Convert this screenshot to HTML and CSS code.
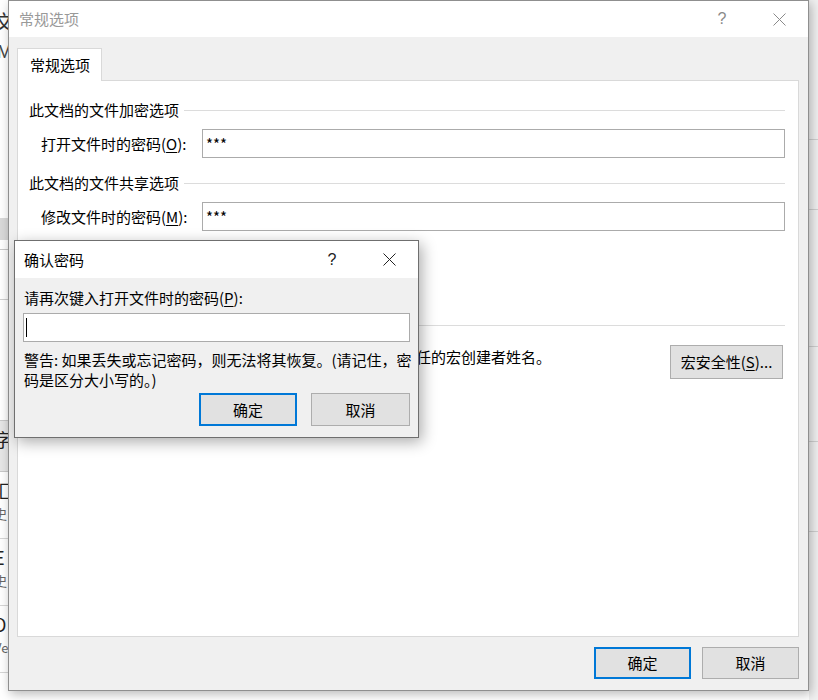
FILE: index.html
```html
<!DOCTYPE html>
<html lang="zh-CN">
<head>
<meta charset="utf-8">
<title>常规选项</title>
<link rel="stylesheet" href="styles.css">
</head>
<body>
<div class="bg-left">
  <div class="bl-top"><span class="bl-wen">文</span><span class="bl-m">M</span></div>
  <div class="bl-band"></div>
  <div class="bl-gap1"></div>
  <div class="bl-band2"></div>
  <div class="bl-gap2"></div>
  <div class="bl-row"><span class="bl-big">字</span></div>
  <div class="bl-row2"><span class="bl-big">汇</span><span class="bl-small">史</span></div>
  <div class="bl-row2"><span class="bl-big">E</span><span class="bl-small">史</span></div>
  <div class="bl-row2"><span class="bl-big">D</span><span class="bl-small">Ve</span></div>
</div>
<div class="bg-right">
  <div class="br-cell br-h1"></div>
  <div class="br-cell br-h2"></div>
  <div class="br-cell br-h3"></div>
  <div class="br-cell br-h4"></div>
  <div class="br-cell br-h5"></div>
</div>

<div class="win main-win">
  <div class="titlebar">
    <span class="title inactive">常规选项</span>
    <span class="tb-help inactive">?</span>
    <span class="tb-close inactive">
      <svg width="13" height="13" viewBox="0 0 13 13"><path d="M0.5 0.5 L12.5 12.5 M12.5 0.5 L0.5 12.5" stroke="currentColor" stroke-width="1" fill="none"/></svg>
    </span>
  </div>
  <div class="main-body">
    <div class="tabs"><div class="tab">常规选项</div></div>
    <div class="panel">
      <div class="group-head"><span>此文档的文件加密选项</span><i class="rule"></i></div>
      <div class="field"><span class="field-label">打开文件时的密码(<u>O</u>):</span><div class="textbox">***</div></div>
      <div class="group-head group-gap"><span>此文档的文件共享选项</span><i class="rule"></i></div>
      <div class="field"><span class="field-label">修改文件时的密码(<u>M</u>):</span><div class="textbox">***</div></div>
      <div class="hidden-rows"></div>
      <div class="group-head macro-head"><i class="rule"></i></div>
      <div class="macro-row">
        <span class="macro-text">调整安全级别以打开可能包含宏病毒的文件，并指定可信任的宏创建者姓名。</span>
        <span class="btn macro-btn">宏安全性(<u>S</u>)...</span>
      </div>
    </div>
    <div class="footer">
      <span class="btn primary footer-btn">确定</span>
      <span class="btn footer-btn">取消</span>
    </div>
  </div>
</div>

<div class="win confirm-win">
  <div class="titlebar confirm-title">
    <span class="title">确认密码</span>
    <span class="tb-help">?</span>
    <span class="tb-close">
      <svg width="13" height="13" viewBox="0 0 13 13"><path d="M0.5 0.5 L12.5 12.5 M12.5 0.5 L0.5 12.5" stroke="currentColor" stroke-width="1" fill="none"/></svg>
    </span>
  </div>
  <div class="confirm-body">
    <div class="confirm-label">请再次键入打开文件时的密码(<u>P</u>):</div>
    <div class="textbox confirm-input"><span class="caret"></span></div>
    <div class="warning"><span class="nowrap">警告: 如果丢失或忘记密码，则无法将其恢复。(请记住，密</span><br><span class="nowrap">码是区分大小写的。)</span></div>
    <div class="confirm-buttons">
      <span class="btn primary ok-btn">确定</span>
      <span class="btn cancel-btn">取消</span>
    </div>
  </div>
</div>
</body>
</html>
```

FILE: styles.css
```css
* { box-sizing: border-box; }
html, body { margin: 0; padding: 0; }
body {
  width: 818px;
  height: 700px;
  overflow: hidden;
  position: relative;
  background: #ffffff;
  font-family: "Noto Sans CJK SC", "Microsoft YaHei", sans-serif;
  font-size: 15px;
  line-height: 20px;
  color: #000;
}
u { text-decoration: underline; text-underline-offset: 2px; }

/* background window fragments */
.bg-left {
  position: absolute;
  left: 0; top: 0;
  width: 9px; height: 700px;
  overflow: hidden;
  background: #fff;
  display: flex;
  flex-direction: column;
}
.bl-top { height: 218px; position: relative; font-size: 20px; color: #333; }
.bl-wen { position: absolute; left: -6px; top: 12px; }
.bl-m { position: absolute; left: -3px; top: 42px; font-family: "Liberation Sans", sans-serif; font-size: 18px; color: #444; }
.bl-band { height: 22px; background: #d9d9d9; }
.bl-gap1 { height: 10px; background: #fff; border-bottom: 1px solid #c8c8c8; }
.bl-band2 { height: 50px; background: #fff; border-bottom: 1px solid #cfcfcf; }
.bl-gap2 { height: 120px; background: #fff; }
.bl-row { height: 52px; background: #e6e6e6; border-top: 1px solid #c8c8c8; border-bottom: 1px solid #c8c8c8; position: relative; }
.bl-row2 { height: 67px; border-bottom: 1px solid #d6d6d6; position: relative; }
.bl-big { position: absolute; left: -6px; top: 8px; font-size: 18px; color: #222; }
.bl-small { position: absolute; left: -6px; top: 32px; font-size: 13px; color: #666; }

.bg-right {
  position: absolute;
  left: 809px; top: 0;
  width: 9px; height: 700px;
  background: #f0f0f0;
  display: flex;
  flex-direction: column;
}
.br-cell { border-bottom: 1px solid #cfcfcf; }
.br-h1 { height: 140px; }
.br-h2 { height: 70px; }
.br-h3 { height: 137px; }
.br-h4 { height: 95px; }
.br-h5 { height: 90px; }

/* windows */
.win {
  position: absolute;
  background: #f0f0f0;
  display: flex;
  flex-direction: column;
}
.main-win {
  left: 8px; top: 0;
  width: 801px; height: 691px;
  border: 1px solid #8f8f8f;
  box-shadow: 2px 3px 10px rgba(0,0,0,0.28);
}
.confirm-win {
  left: 14px; top: 240px;
  width: 405px; height: 198px;
  border: 1px solid #6f6f6f;
  box-shadow: 3px 4px 14px rgba(0,0,0,0.33);
}

.titlebar {
  height: 36px;
  background: #fff;
  display: flex;
  align-items: center;
  padding-left: 10px;
  padding-right: 19px;
  flex: none;
}
.confirm-title { height: 37px; padding-left: 9px; }
.title { flex: 1; color: #000; }
.title.inactive { color: #999; }
.tb-help {
  width: 20px;
  text-align: center;
  font-family: "Liberation Sans", sans-serif;
  font-size: 16px;
  color: #222;
}
.tb-close {
  width: 20px;
  margin-left: 37px;
  display: flex;
  justify-content: center;
  align-items: center;
  color: #222;
}
.tb-help.inactive, .tb-close.inactive { color: #8a8a8a; }

/* main body */
.main-body {
  flex: 1;
  display: flex;
  flex-direction: column;
  padding: 11px 9px 11px 8px;
}
.tabs { height: 32px; display: flex; flex: none; }
.tab {
  width: 85px;
  height: 33px;
  margin-bottom: -1px;
  background: #fff;
  border: 1px solid #d9d9d9;
  border-bottom: none;
  padding-left: 12px;
  line-height: 32px;
  position: relative;
  z-index: 1;
}
.panel {
  flex: 1;
  background: #fff;
  border: 1px solid #d9d9d9;
  padding: 19px 13px 0 11px;
  display: flex;
  flex-direction: column;
}
.group-head { height: 20px; display: flex; align-items: center; flex: none; }
.group-head .rule { flex: 1; height: 1px; background: #dcdcdc; margin-left: 5px; }
.group-gap { margin-top: 15px; }
.field { margin-top: 9px; display: flex; align-items: center; height: 29px; flex: none; }
.field-label { width: 173px; padding-left: 12px; flex: none; }
.textbox {
  flex: 1;
  height: 29px;
  background: #fff;
  border: 1px solid #ababab;
  padding-left: 3px;
  line-height: 27px;
}
.hidden-rows { height: 74px; flex: none; }
.macro-head { margin-top: 10px; }
.macro-row {
  margin-top: 10px;
  height: 34px;
  display: flex;
  justify-content: space-between;
  align-items: flex-start;
  flex: none;
}
.macro-text { padding-left: 12px; line-height: 24px; white-space: nowrap; }
.macro-btn { width: 113px; height: 34px; margin-right: 2px; }

.btn {
  display: flex;
  align-items: center;
  justify-content: center;
  background: #e1e1e1;
  border: 1px solid #adadad;
  color: #000;
  flex: none;
}
.btn.primary { border: 2px solid #0078d7; }

.footer {
  margin-top: 10px;
  height: 32px;
  display: flex;
  justify-content: flex-end;
  gap: 11px;
  flex: none;
}
.footer-btn { width: 97px; height: 32px; }

/* confirm dialog body */
.confirm-body {
  flex: 1;
  padding: 10px 8px 11px 8px;
  display: flex;
  flex-direction: column;
}
.confirm-label { height: 20px; padding-left: 1px; }
.confirm-input {
  flex: none;
  margin-top: 5px;
  height: 29px;
  display: flex;
  align-items: center;
  padding-left: 2px;
}
.caret { width: 1px; height: 19px; background: #000; }
.warning { margin-top: 8px; height: 40px; padding-left: 1px; }
.nowrap { white-space: nowrap; }
.confirm-buttons {
  margin-top: 3px;
  height: 33px;
  display: flex;
  justify-content: flex-end;
  gap: 14px;
}
.ok-btn { width: 98px; height: 33px; }
.cancel-btn { width: 99px; height: 33px; }
```
